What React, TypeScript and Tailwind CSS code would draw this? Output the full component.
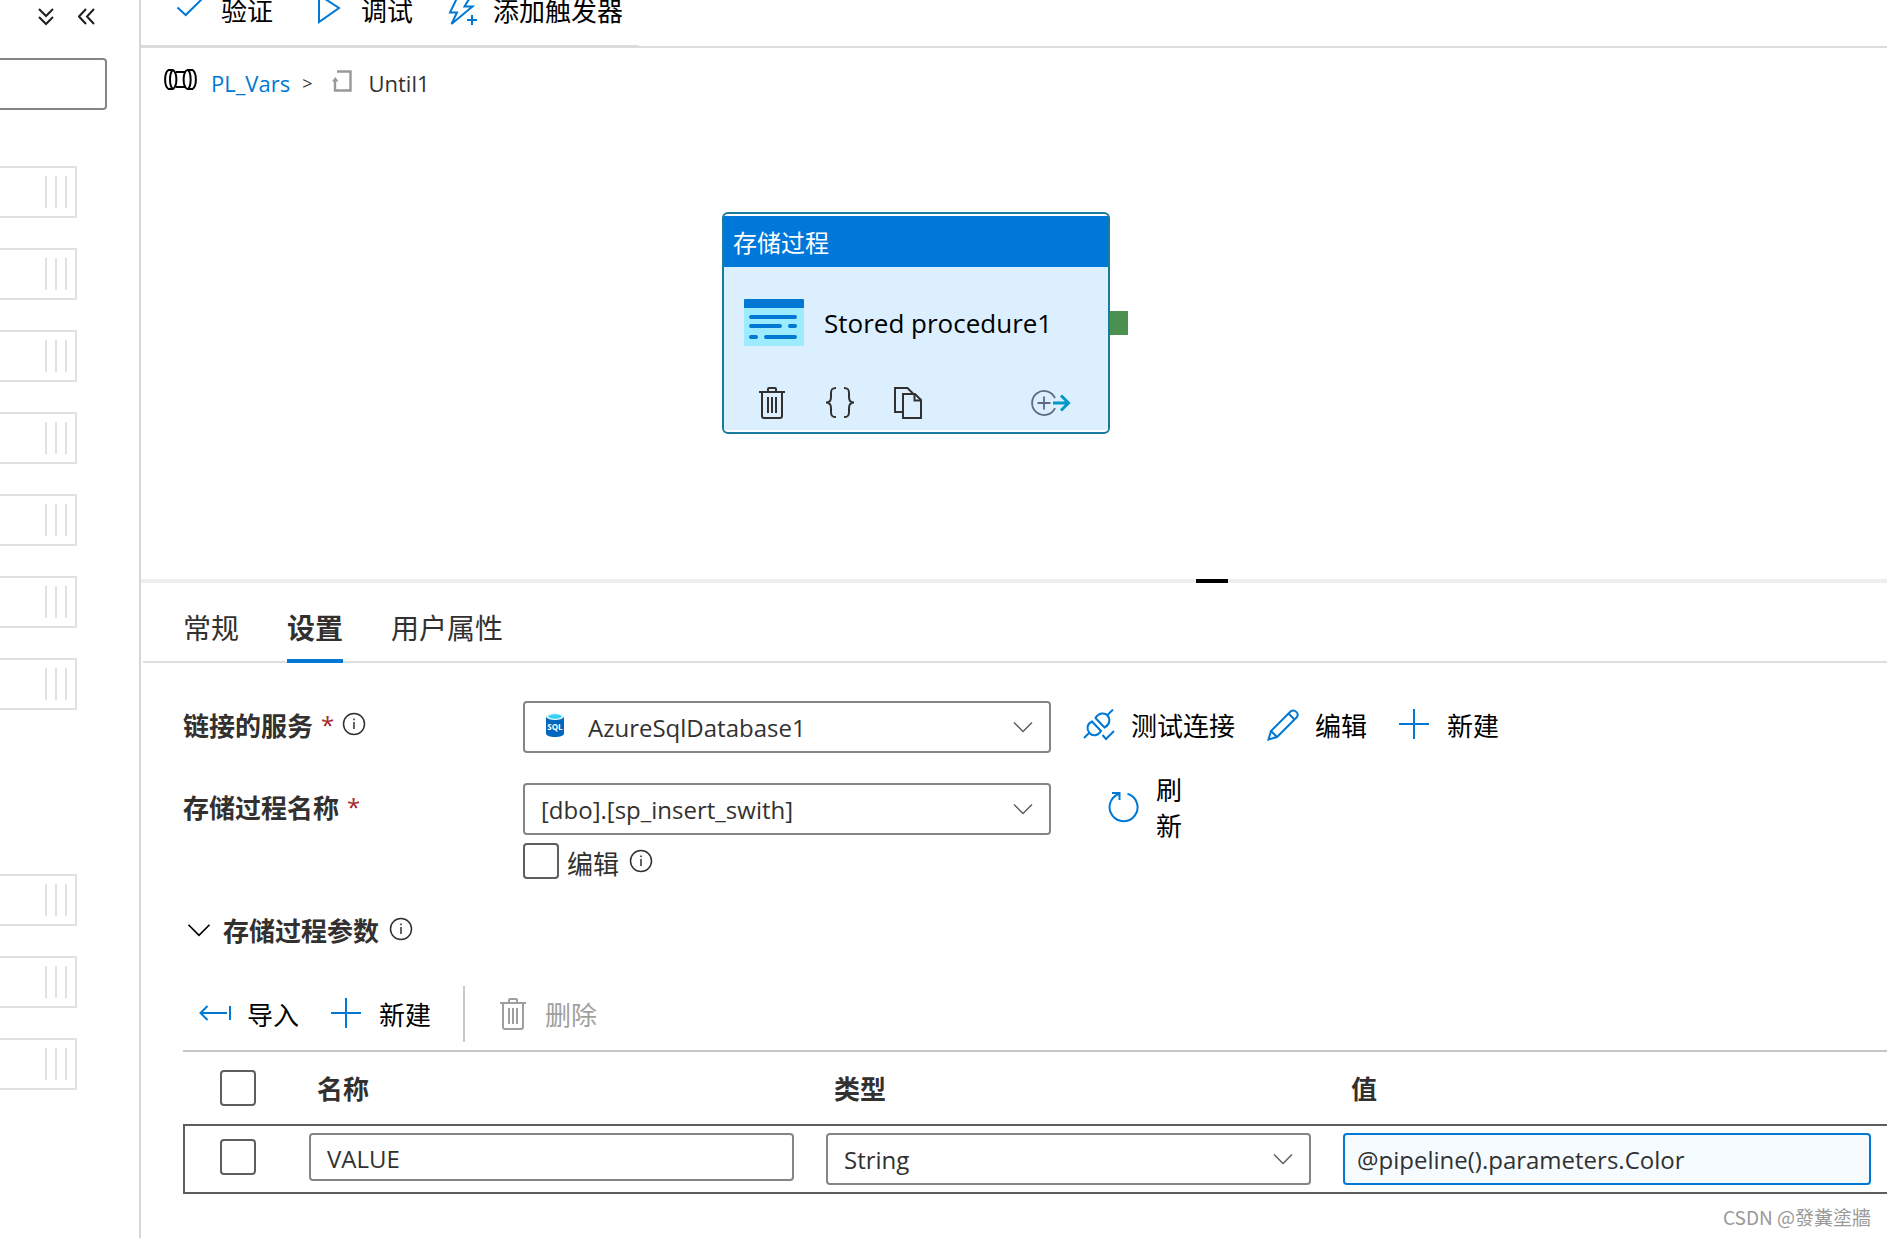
import type { ReactNode } from "react";

type IconProps = { className?: string };

function CheckIcon() {
  return (
    <svg className="h-8 w-8 shrink-0 fill-none stroke-[#0078d4]" strokeWidth="2" viewBox="0 0 32 32" aria-hidden="true">
      <path d="M4.500 13.500 12.700 21 31 3" />
    </svg>
  );
}

function PlayIcon() {
  return (
    <svg className="h-8 w-8 shrink-0 fill-none stroke-[#0078d4]" strokeWidth="2" viewBox="0 0 32 32" aria-hidden="true">
      <path d="M6 1 26 14 6 28Z" />
    </svg>
  );
}

function TriggerIcon() {
  return (
    <svg className="h-8 w-8 shrink-0 fill-none stroke-[#0078d4]" strokeWidth="2" viewBox="0 0 32 32" aria-hidden="true">
      <path d="M13 2 5 18.500H12L6.500 30 27.500 12.500H19.500L26 2Z" />
      <path d="M27 21V31M22 26H32" />
    </svg>
  );
}

function PipelineIcon() {
  return (
    <svg className="mb-2 h-[21px] w-[33px] shrink-0 fill-none stroke-black" strokeWidth="2" viewBox="0 0 33 21" aria-hidden="true">
      <path d="M9 1H4.500C0 4 0 17 4.500 20H9" />
      <path d="M9 1C5 4 5 17 9 20C13.500 17 13.500 4 9 1Z" />
      <path d="M12 3H21.500M12 18H21.500" />
      <path d="M23 1H28.500C33 4 33 17 28.500 20H23M23 1C18.500 4 18.500 17 23 20M24 1C27.500 4 27.500 17 24 20" />
    </svg>
  );
}

function UntilIcon() {
  return (
    <svg className="mb-1 h-[22px] w-5 shrink-0 fill-none stroke-[#999]" strokeWidth="2.400" viewBox="0 0 20 22" aria-hidden="true">
      <path d="M5 1.500H18.500V20.500H3V10" />
      <path d="M3.300 7 0 11.500H6.500Z" className="fill-[#999] stroke-none" />
    </svg>
  );
}

function InfoIcon({ className = "" }: IconProps) {
  return (
    <svg className={`h-6 w-6 shrink-0 fill-none stroke-[#323130] ${className}`} strokeWidth="1.500" viewBox="0 0 24 24" aria-hidden="true">
      <circle cx="12" cy="12" r="10.500" />
      <path d="M12 10V17" />
      <path d="M12 6.500V8.300" />
    </svg>
  );
}

function ChevronDown({ className = "" }: IconProps) {
  return (
    <svg className={`fill-none stroke-current ${className}`} strokeWidth="1.500" viewBox="0 0 20 12" aria-hidden="true">
      <path d="M1 1.500 10 10.500 19 1.500" />
    </svg>
  );
}

function PlusIcon() {
  return (
    <svg className="h-8 w-8 shrink-0 fill-none stroke-[#0078d4]" strokeWidth="2" viewBox="0 0 32 32" aria-hidden="true">
      <path d="M15 0V30M0 15H30" />
    </svg>
  );
}

function TrashIcon() {
  return (
    <svg className="h-8 w-8 shrink-0 fill-none stroke-current" strokeWidth="2" viewBox="0 0 32 32" aria-hidden="true">
      <path d="M3 5H29M12 5V2Q12 1 13 1H19Q20 1 20 2V5" />
      <path d="M6 5V29Q6 31 8 31H24Q26 31 26 29V5M12 10V26M16 10V26M20 10V26" />
    </svg>
  );
}

function BracesIcon() {
  return (
    <svg className="h-8 w-8 shrink-0 fill-none stroke-current" strokeWidth="2" viewBox="0 0 32 32" aria-hidden="true">
      <path d="M12 1C8 1 7 2.500 7 6V10C7 13.500 6 15.500 2 15.500C6 15.500 7 17.500 7 21V25C7 28.500 8 30 12 30" />
      <path d="M20 1C24 1 25 2.500 25 6V10C25 13.500 26 15.500 30 15.500C26 15.500 25 17.500 25 21V25C25 28.500 24 30 20 30" />
    </svg>
  );
}

function CopyIcon() {
  return (
    <svg className="h-8 w-8 shrink-0 fill-none stroke-current" strokeWidth="2" viewBox="0 0 32 32" aria-hidden="true">
      <path d="M10 25H3V1H15.500L21 6.500" />
      <path d="M11 7H23L29 13V31H11ZM22.500 7V13.500H29" />
    </svg>
  );
}

function AddOutputIcon() {
  return (
    <svg className="h-[26px] w-10 shrink-0 fill-none stroke-[#5b6b80]" strokeWidth="1.800" viewBox="0 0 40 26" aria-hidden="true">
      <path d="M24 8A12 12 0 1 0 24 18" />
      <path d="M13 6.500V19.500M6.500 13H19.500" />
      <path d="M22 13H37.500M30 5.500 37.500 13 30 20.500" className="stroke-[#0098c7]" strokeWidth="3" />
    </svg>
  );
}

function ProcedureIcon() {
  return (
    <svg className="mb-[2px] h-[47px] w-[60px] shrink-0" viewBox="0 0 60 47" aria-hidden="true">
      <rect width="60" height="47" rx="1" fill="#9cebff" />
      <path d="M0 9V1Q0 0 1 0H59Q60 0 60 1V9Z" fill="#0078d4" />
      <path
        d="M7 18H51M7 27H36M46 27H51M7 38H12M22 38H51"
        fill="none"
        stroke="#0078d4"
        strokeWidth="4"
        strokeLinecap="round"
      />
    </svg>
  );
}

function SqlIcon() {
  return (
    <svg className="mb-1 h-6 w-[18px] shrink-0" viewBox="0 0 18 24" aria-hidden="true">
      <path d="M0 3.500V20.500C0 22.500 4 24 9 24S18 22.500 18 20.500V3.500Z" fill="#0067be" />
      <ellipse cx="9" cy="3.500" rx="9" ry="3.500" fill="#e8f6fb" />
      <ellipse cx="9" cy="3.500" rx="6.800" ry="2.200" fill="#32d4f5" />
      <text x="9" y="16.500" textAnchor="middle" fill="#fff" fontSize="8" fontWeight="700" fontFamily="Open Sans, sans-serif">
        SQL
      </text>
    </svg>
  );
}

function PlugIcon() {
  return (
    <svg className="h-8 w-8 shrink-0 fill-none stroke-[#0078d4]" strokeWidth="2" viewBox="0 0 32 32" aria-hidden="true">
      <path d="M1 29 6.500 23.500M24.500 6 30 .5" />
      <path d="M9 12.500 18 22C15 27 9.500 27.500 6.500 24S3.500 15 9 12.500Z" />
      <path d="M12.500 9 21.500 18.500C27 15.500 27.500 10 24.500 6.500S15.500 4 12.500 9Z" />
      <path d="M19.500 26 23 30 31 22" />
    </svg>
  );
}

function PencilIcon() {
  return (
    <svg className="h-8 w-8 shrink-0 fill-none stroke-[#0078d4]" strokeWidth="2" viewBox="0 0 32 32" aria-hidden="true">
      <path d="M1.500 30.500 4 22 23.500 2.500C27.500-.5 33 4.500 29.500 8.500L10 28ZM4 22 10 28M21.500 4.500 27.500 10.500" />
    </svg>
  );
}

function RefreshIcon() {
  return (
    <svg className="h-8 w-8 shrink-0 fill-none stroke-[#0078d4]" strokeWidth="2" viewBox="0 0 32 32" aria-hidden="true">
      <path d="M19.500 2.800A14 14 0 1 1 11 3" />
      <path d="M4 2H11.500V9" />
    </svg>
  );
}

function ImportIcon() {
  return (
    <svg className="h-8 w-8 shrink-0 fill-none stroke-[#0078d4]" strokeWidth="2" viewBox="0 0 32 32" aria-hidden="true">
      <path d="M1.500 15H28M8.500 8 1.500 15 8.500 22" />
      <path d="M31 8V22" />
    </svg>
  );
}

function CommandButton({ icon, children, disabled }: { icon: ReactNode; children: ReactNode; disabled?: boolean }) {
  return (
    <button
      type="button"
      disabled={disabled}
      className="flex items-center gap-4 text-[26px] leading-9 whitespace-nowrap text-black disabled:text-[#a19f9d]"
    >
      {icon}
      <span>{children}</span>
    </button>
  );
}

function Dropdown({ id, label, value, icon }: { id: string; label?: string; value: string; icon?: ReactNode }) {
  return (
    <div className="relative flex h-[52px] w-full items-center rounded border-2 border-[#858585] bg-white pl-4">
      {icon && <span className="mr-6 ml-[5px]">{icon}</span>}
      <select
        id={id}
        aria-label={label}
        defaultValue={value}
        className="h-full min-w-0 flex-1 appearance-none bg-transparent pt-[2px] font-['Open_Sans','Noto_Sans_CJK_SC',sans-serif] text-[24px] text-[#323130]"
      >
        <option>{value}</option>
      </select>
      <ChevronDown className="pointer-events-none absolute right-4 h-3 w-5 text-[#605e5c]" />
    </div>
  );
}

function Checkbox({ id, label }: { id: string; label?: string }) {
  return (
    <input
      id={id}
      type="checkbox"
      aria-label={label}
      className="block h-9 w-9 shrink-0 appearance-none rounded border-2 border-[#605e5c] bg-white checked:bg-[#0078d4]"
    />
  );
}

function ActivityItems({ count }: { count: number }) {
  return (
    <ul className="flex flex-col gap-[30px]">
      {Array.from({ length: count }, (_, i) => (
        <li
          key={i}
          draggable
          className="flex h-[52px] w-[77px] items-center justify-end gap-2 border-2 border-l-0 border-[#e1e1e1] pr-2"
        >
          <span className="h-8 w-[2px] bg-[#e1e1e1]" />
          <span className="h-8 w-[2px] bg-[#e1e1e1]" />
          <span className="h-8 w-[2px] bg-[#e1e1e1]" />
        </li>
      ))}
    </ul>
  );
}

function ActivitiesPanel() {
  return (
    <aside className="w-[141px] shrink-0 border-r-2 border-[#d6d6d6]">
      <div className="flex h-[58px] items-start justify-end gap-6 pt-2 pr-11 text-[#201f1e]">
        <button type="button" aria-label="Expand all">
          <svg className="h-[18px] w-4 fill-none stroke-current" strokeWidth="2" viewBox="0 0 16 18" aria-hidden="true">
            <path d="M1 1 8 8 15 1M1 9 8 16 15 9" />
          </svg>
        </button>
        <button type="button" aria-label="Collapse panel">
          <svg className="h-[18px] w-[17px] fill-none stroke-current" strokeWidth="2" viewBox="0 0 17 18" aria-hidden="true">
            <path d="M8 1 1 8.500 8 16M16 1 9 8.500 16 16" />
          </svg>
        </button>
      </div>
      <input
        type="search"
        aria-label="Search activities"
        className="block h-[52px] w-[107px] rounded-r border-2 border-l-0 border-[#858585] text-[24px]"
      />
      <div className="flex flex-col gap-[164px] pt-14">
        <ActivityItems count={7} />
        <ActivityItems count={3} />
      </div>
    </aside>
  );
}

function ActivityNode() {
  return (
    <div className="absolute top-[164px] left-[581px] w-[388px] rounded-md border-2 border-[#187c9c] bg-white py-[2px]">
      <div className="flex h-[51px] items-center bg-[#0078d9] px-[9px] text-[24px] leading-8 text-white">存储过程</div>
      <div className="bg-[#dcefff]">
        <div className="flex h-[112px] items-center gap-5 pl-5">
          <ProcedureIcon />
          <span className="font-['Open_Sans',sans-serif] text-[26px] text-black">Stored procedure1</span>
        </div>
        <div className="flex h-[51px] items-start pr-[37px] pl-8 text-[#323130]">
          <button type="button" aria-label="Delete" className="mt-2">
            <TrashIcon />
          </button>
          <button type="button" aria-label="Code" className="mt-2 ml-9">
            <BracesIcon />
          </button>
          <button type="button" aria-label="Clone" className="mt-2 ml-9">
            <CopyIcon />
          </button>
          <button type="button" aria-label="Add output" className="mt-[11px] ml-auto">
            <AddOutputIcon />
          </button>
        </div>
      </div>
      <span className="absolute top-[97px] -right-5 h-6 w-[18px] bg-[#4a9050]" />
    </div>
  );
}

function SettingsForm() {
  return (
    <form className="pt-[38px] pl-[42px] text-[26px] leading-9 text-[#323130]">
      <div className="flex items-center">
        <div className="flex w-[340px] shrink-0 items-center pb-1">
          <label htmlFor="linked-service" className="font-bold">
            链接的服务
          </label>
          <span className="ml-2 font-['Open_Sans',sans-serif] text-[24px] text-[#a4262c]">*</span>
          <InfoIcon className="mb-[2px] ml-2" />
        </div>
        <div className="w-[528px]">
          <Dropdown id="linked-service" value="AzureSqlDatabase1" icon={<SqlIcon />} />
        </div>
        <div className="ml-8 flex gap-8 pb-1">
          <CommandButton icon={<PlugIcon />}>测试连接</CommandButton>
          <CommandButton icon={<PencilIcon />}>编辑</CommandButton>
          <CommandButton icon={<PlusIcon />}>新建</CommandButton>
        </div>
      </div>

      <div className="mt-[30px] flex h-[52px] items-center">
        <div className="flex w-[340px] shrink-0 items-center pb-1">
          <label htmlFor="procedure-name" className="font-bold">
            存储过程名称
          </label>
          <span className="ml-2 font-['Open_Sans',sans-serif] text-[24px] text-[#a4262c]">*</span>
        </div>
        <div className="w-[528px]">
          <Dropdown id="procedure-name" value="[dbo].[sp_insert_swith]" />
        </div>
        <button type="button" className="ml-[57px] flex items-center gap-4 pb-1 text-left text-black">
          <RefreshIcon />
          <span className="w-[26px]">刷新</span>
        </button>
      </div>

      <div className="mt-2 ml-[340px] flex h-9 items-center">
        <Checkbox id="edit-procedure" />
        <label htmlFor="edit-procedure" className="ml-2 pt-[3px]">
          编辑
        </label>
        <InfoIcon className="ml-[10px]" />
      </div>

      <div className="mt-[26px] flex h-[52px] items-center pb-[2px]">
        <button type="button" aria-expanded="true" className="flex items-center gap-3 pl-1 font-bold">
          <ChevronDown className="h-[14px] w-6 text-black" />
          存储过程参数
        </button>
        <InfoIcon className="mb-[2px] ml-[10px]" />
      </div>

      <div className="mt-[29px] flex h-14 items-center gap-8 pl-4">
        <CommandButton icon={<ImportIcon />}>导入</CommandButton>
        <CommandButton icon={<PlusIcon />}>新建</CommandButton>
        <span className="h-full w-[2px] bg-[#c8c8c8]" />
        <CommandButton icon={<TrashIcon />} disabled>
          删除
        </CommandButton>
      </div>

      <ParameterTable />
    </form>
  );
}

function ParameterTable() {
  return (
    <table className="mt-2 w-full table-fixed border-separate border-spacing-0 border-t-2 border-[#c8c6c4]">
      <colgroup>
        <col className="w-[126px]" />
        <col className="w-[517px]" />
        <col className="w-[517px]" />
        <col />
      </colgroup>
      <thead>
        <tr className="h-[72px] text-left">
          <th className="pl-[37px]">
            <Checkbox id="all-params" label="Select all" />
          </th>
          <th className="pl-2">名称</th>
          <th className="pl-2">类型</th>
          <th className="pl-2">值</th>
        </tr>
      </thead>
      <tbody className="font-['Open_Sans',sans-serif] text-[24px]">
        <tr className="align-top">
          <td className="border-y-2 border-l-2 border-[#605e5c] pt-[13px] pl-[35px]">
            <Checkbox id="param-value" label="Select VALUE" />
          </td>
          <td className="border-y-2 border-[#605e5c] py-[7px] pr-8">
            <input
              aria-label="名称"
              defaultValue="VALUE"
              className="block h-12 w-full rounded border-2 border-[#858585] px-4 pt-[2px]"
            />
          </td>
          <td className="border-y-2 border-[#605e5c] py-[7px] pr-8">
            <Dropdown id="param-type" label="类型" value="String" />
          </td>
          <td className="border-y-2 border-[#605e5c] py-[7px] pr-4">
            <input
              aria-label="值"
              defaultValue="@pipeline().parameters.Color"
              className="block h-[52px] w-full rounded border-2 border-[#0078d4] bg-[#f5fbff] px-3"
            />
          </td>
        </tr>
      </tbody>
    </table>
  );
}

const tabs = ["常规", "设置", "用户属性"];

export default function App() {
  return (
    <div className="flex min-h-screen overflow-hidden bg-white font-['Noto_Sans_CJK_SC',sans-serif] text-[#323130]">
      <ActivitiesPanel />

      <main className="flex min-w-0 flex-1 flex-col">
        <div className="flex h-12 border-b-2 border-[#dcdcdc]">
          <div className="flex items-start gap-8 border-b border-[#dcdcdc] pr-4 pl-8">
            <div className="flex h-5 items-center pr-2">
              <CommandButton icon={<CheckIcon />}>验证</CommandButton>
            </div>
            <div className="flex h-5 items-center">
              <CommandButton icon={<PlayIcon />}>调试</CommandButton>
            </div>
            <div className="flex h-5 items-center">
              <CommandButton icon={<TriggerIcon />}>添加触发器</CommandButton>
            </div>
          </div>
        </div>

        <section className="relative h-[531px]">
          <nav className="flex h-[70px] items-center pl-[23px] font-['Open_Sans',sans-serif] text-[23px]">
            <PipelineIcon />
            <a href="#pipeline" className="ml-[14px] text-[22px] text-[#0078d4]">
              PL_Vars
            </a>
            <span className="mr-5 ml-3 text-[18px]">&gt;</span>
            <UntilIcon />
            <span className="ml-4 text-[22px]">Until1</span>
          </nav>
          <ActivityNode />
        </section>

        <div className="h-1 bg-[#eeeeee]">
          <div className="ml-[60.4%] h-1 w-8 bg-black" />
        </div>

        <div role="tablist" className="ml-[2px] flex gap-12 border-b-2 border-[#dedede] pt-3 pl-10">
          {tabs.map((tab) => {
            const selected = tab === "设置";
            return (
              <button
                key={tab}
                type="button"
                role="tab"
                aria-selected={selected}
                className={`-mb-[2px] h-[68px] border-b-4 text-[28px] leading-9 ${
                  selected ? "border-[#0078d4] font-bold" : "border-transparent"
                }`}
              >
                {tab}
              </button>
            );
          })}
        </div>

        <SettingsForm />

        <p className="mt-[11px] pr-4 text-right text-[19px] leading-6 text-[#999999]">CSDN @發糞塗牆</p>
      </main>
    </div>
  );
}
